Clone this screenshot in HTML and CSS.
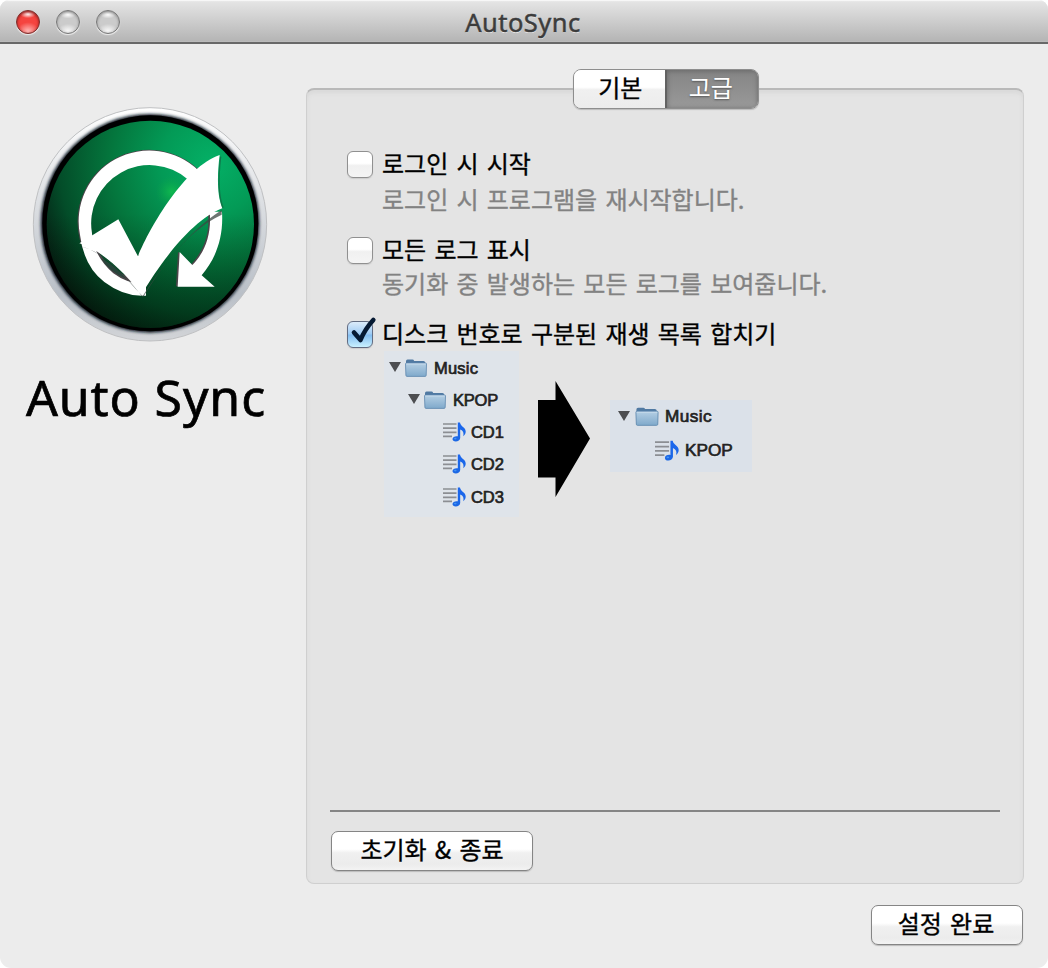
FILE: index.html
```html
<!DOCTYPE html>
<html lang="ko">
<head>
<meta charset="utf-8">
<title>AutoSync</title>
<link rel="stylesheet" href="styles.css">
</head>
<body>
<svg class="defs" width="0" height="0" aria-hidden="true">
  <defs>
    <linearGradient id="folderFill" x1="0" y1="0" x2="0" y2="1">
      <stop offset="0" stop-color="#b5cfe4"/><stop offset="1" stop-color="#7fa9cb"/>
    </linearGradient>
    <linearGradient id="noteFill" x1="0" y1="0" x2="0" y2="1">
      <stop offset="0" stop-color="#1a66ee"/><stop offset="1" stop-color="#1c68e4"/>
    </linearGradient>
    <symbol id="folder" viewBox="0 0 22 18">
      <path d="M1 6V2.2Q1 .6 2.5 .6H7.5Q8.6 .6 9.2 2H18.5Q20 2 20.3 3.8V6Z" fill="#5079a2"/>
      <path d="M.5 5Q.5 4 1.5 4H20.5Q21.5 4 21.5 5L21.2 16.3Q21.2 17.4 20 17.4H2Q.9 17.4.9 16.3Z" fill="url(#folderFill)" stroke="#5d87ad" stroke-width=".8"/>
      <path d="M1.3 5H20.7" stroke="#cbdeed" stroke-width=".8"/>
    </symbol>
    <symbol id="playlist" viewBox="0 0 23 20">
      <path d="M0 2H13.5M0 6.2H13.5M0 10.3H13.5M0 14.4H9" stroke="#8c8e93" stroke-width="1.7"/>
      <path d="M14.8 .6H17C17.4 4.600 22.700 5.300 22.700 9.600C22.700 11.600 21.700 13.400 20.200 14.200C21.100 11 20.200 8.800 17.200 7.600V16C17.100 18.200 15 19.600 12.800 19.600C10.800 19.600 9.500 18.600 9.500 17.100C9.500 15 12.200 13.800 14.800 14.300Z" fill="url(#noteFill)"/>
      <ellipse cx="12.300" cy="16.600" rx="1.300" ry=".8" fill="#4ea0f8" opacity=".8"/>
    </symbol>
  </defs>
</svg>
<div class="window">
  <header class="titlebar">
    <div class="lights"><i class="light close"></i><i class="light"></i><i class="light"></i></div>
    <h1 class="title">AutoSync</h1>
  </header>
  <div class="content">
    <aside class="sidebar">
      <svg class="logo" viewBox="0 0 750 750">
        <defs>
          <linearGradient id="rim" x1="0" y1="0" x2="0" y2="1">
            <stop offset="0" stop-color="#fff"/><stop offset=".45" stop-color="#d9dce0"/><stop offset=".8" stop-color="#b9bfc7"/><stop offset="1" stop-color="#d3d5d8"/>
          </linearGradient>
          <radialGradient id="ball" gradientUnits="userSpaceOnUse" cx="560" cy="190" r="610">
            <stop offset="0" stop-color="#04b066"/><stop offset=".25" stop-color="#039a56"/><stop offset=".5" stop-color="#04763d"/><stop offset=".75" stop-color="#034d29"/><stop offset="1" stop-color="#060708"/>
          </radialGradient>
          <linearGradient id="shade" x1="0" y1="0" x2="0" y2="1">
            <stop offset=".45" stop-color="#001b08" stop-opacity="0"/><stop offset="1" stop-color="#001b08" stop-opacity=".45"/>
          </linearGradient>
          <radialGradient id="glow"><stop offset="0" stop-color="#13c04d" stop-opacity=".8"/><stop offset="1" stop-color="#0aa547" stop-opacity="0"/></radialGradient>
          <filter id="soft"><feGaussianBlur stdDeviation="4"/></filter>
          <filter id="softer"><feGaussianBlur stdDeviation="2"/></filter>
        </defs>
        <circle cx="375" cy="373" r="350" fill="url(#rim)" stroke="#bfc0c2" stroke-width="3"/>
        <circle cx="375" cy="370" r="328" fill="#111923" filter="url(#soft)"/>
        <circle cx="376" cy="370" r="324" fill="#000"/>
        <circle cx="376" cy="373" r="311" fill="url(#ball)"/>
        <circle cx="376" cy="373" r="311" fill="url(#shade)"/>
        <circle cx="440" cy="275" r="48" fill="url(#glow)"/>
        <g filter="url(#softer)">
          <path d="M510 224A196 196 0 1 0 352 562" fill="none" stroke="#4b4448" stroke-width="38" transform="translate(-4 -3)"/>
          <path d="M554 345H588C594 413 573 475 530 526L569 560H458L464 456L502 495C542 454 560 400 554 345Z" fill="#4b4448" transform="translate(-5 -1)"/>
        </g>
        <path d="M521 212A212 212 0 0 0 165 405Q177 500 238 546T363 587V552Q310 554 265 520Q205 467 201 400A175 175 0 0 1 488 238Z" fill="#fff"/>
        <path d="M554 335H591C596 413 573 475 530 526L569 560H458L464 456L502 495C542 454 560 400 554 335Z" fill="#fff"/>
        <path d="M228 474Q263 492 304 536Q250 514 228 474Z" fill="#28443a"/>
        <path d="M165 438C220 454 270 486 352 590C390 530 480 400 590 330V344C490 390 410 500 355 590Q335 572 306 537Q230 454 165 438Z" fill="#3d4743" opacity=".75" filter="url(#softer)"/>
        <path d="M163 430L280 358L339 469C375 380 480 200 584 165C577 220 575 285 592 325C500 360 405 490 350 583C310 530 230 448 163 430Z" fill="#fff"/>
        <path d="M587 170C581 220 579 285 594 323" stroke="#18583c" stroke-width="4" fill="none" opacity=".6"/>
      </svg>
      <p class="appname">Auto Sync</p>
    </aside>
    <main class="main">
      <nav class="tabs"><span class="tab first">기본</span><span class="tab selected">고급</span></nav>
      <section class="panel">
        <div class="options">
          <div class="option"><i class="box"></i><span>로그인 시 시작</span></div>
          <p class="hint">로그인 시 프로그램을 재시작합니다.</p>
          <div class="option second"><i class="box"></i><span>모든 로그 표시</span></div>
          <p class="hint tight">동기화 중 발생하는 모든 로그를 보여줍니다.</p>
          <div class="option third"><i class="box checked"><svg class="check" viewBox="0 0 30 34"><path d="M7 17.500L13.500 25Q18 14 26.300 5" fill="none" stroke="#061a33" stroke-width="4.600" stroke-linecap="round" stroke-linejoin="round"/></svg></i><span>디스크 번호로 구분된 재생 목록 합치기</span></div>
          <div class="example">
            <div class="tree before">
              <div class="node"><i class="disclosure"></i><svg class="folder"><use href="#folder"/></svg><span>Music</span></div>
              <div class="node level2"><i class="disclosure"></i><svg class="folder"><use href="#folder"/></svg><span>KPOP</span></div>
              <div class="node leaf"><svg class="playlist"><use href="#playlist"/></svg><span>CD1</span></div>
              <div class="node leaf"><svg class="playlist"><use href="#playlist"/></svg><span>CD2</span></div>
              <div class="node leaf"><svg class="playlist"><use href="#playlist"/></svg><span>CD3</span></div>
            </div>
            <svg class="arrow" viewBox="0 0 52 116"><path d="M0 19H17.500V0L52 57.500L17.500 116V96.500H0Z"/></svg>
            <div class="tree after">
              <div class="node"><i class="disclosure"></i><svg class="folder"><use href="#folder"/></svg><span>Music</span></div>
              <div class="node leaf"><svg class="playlist"><use href="#playlist"/></svg><span>KPOP</span></div>
            </div>
          </div>
        </div>
        <footer class="actions"><button class="button reset">초기화 &amp; 종료</button></footer>
      </section>
      <button class="button done">설정 완료</button>
    </main>
  </div>
</div>
</body>
</html>
```

FILE: styles.css
```css
* { box-sizing: border-box; }
body { margin: 0; background: #fff; font-family: "Noto Sans", "Noto Sans CJK KR", sans-serif; color: #000; }
p, h1 { margin: 0; font-weight: 400; }
.defs { position: absolute; }
.window { width: 1048px; height: 968px; border-radius: 9px 9px 11px 11px; background: #ececec; overflow: hidden; }
.titlebar { height: 44px; border-bottom: 2px solid #686868; background: linear-gradient(#f2f2f2 0, #e4e4e4 2px, #b5b5b5 41px, #c0c0c0 42px); display: grid; grid-template-columns: 1fr auto 1fr; align-items: center; box-shadow: inset 0 1px #f7f7f7; }
.lights { display: flex; gap: 16px; padding: 1px 0 0 16px; }
.light { width: 24px; height: 24px; border-radius: 50%; border: 1px solid #777; background: radial-gradient(ellipse 8px 4px at 50% 16%, #fff, transparent), radial-gradient(ellipse 10px 7px at 50% 90%, #f8f8f8, transparent), #cbcbcb; box-shadow: inset 0 1px 3px #888, 0 1px 1px #eee; }
.close { border-color: #78302e; background: radial-gradient(ellipse 8px 4px at 50% 14%, #fff, transparent), radial-gradient(ellipse 11px 9px at 50% 92%, #ffbab8, transparent), #f5443f; box-shadow: inset 0 1px 3px #851715, 0 1px 1px #eee; }
.title { font-size: 25.500px; line-height: 40px; color: #3c3c3c; text-shadow: 0 1px #eee; -webkit-text-stroke: .5px #3c3c3c; transform: translate(-1px, 1px); letter-spacing: .5px; }
.content { display: flex; height: 924px; }
.sidebar { width: 306px; padding: 56px 0 0 25px; }
.logo { display: block; width: 250px; height: 250px; }
.appname { width: 242px; font-size: 50px; line-height: 60px; margin-top: 17px; text-align: center; white-space: nowrap; letter-spacing: .9px; -webkit-text-stroke: .7px #000; }
.main { width: 718px; display: flex; flex-direction: column; padding-top: 25px; }
.tabs { align-self: center; width: 186px; height: 40px; display: flex; margin: 0 0 -21px 2px; border: 1.500px solid #8e8e8e; border-radius: 8px; overflow: hidden; z-index: 1; box-shadow: 0 1px 1px #bbb; font: 24px/34px "Noto Sans CJK KR", sans-serif; text-align: center; -webkit-text-stroke: .35px; }
.tab { flex: 1; background: linear-gradient(#fff 45%, #f0f0f0 52%, #ececec); }
.first { padding-left: 2px; }
.selected { color: #fff; background: linear-gradient(#858585, #999); border-left: 2px solid #626262; box-shadow: inset 0 1px 5px #666; text-shadow: 0 1px 2px #555; padding-right: 3px; -webkit-text-stroke: 0; }
.panel { height: 796px; background: #e4e4e4; border: 1.500px solid #cfcfcf; border-top: 2px solid #b9b9b9; border-radius: 8px; box-shadow: inset 0 3px 4px #d9d9d9; display: flex; flex-direction: column; padding: 55px 23px 12px; }
.options { flex: 1; padding-left: 17px; font: 24px/36px "Noto Sans CJK KR", sans-serif; word-spacing: 1.500px; -webkit-text-stroke: .35px; }
.option { display: flex; align-items: center; gap: 9px; height: 36px; }
.second { margin-top: 14px; }
.third { margin-top: 16px; }
.box { position: relative; width: 26px; height: 27px; margin-top: 3px; border: 1.500px solid #909090; border-radius: 6px; background: linear-gradient(#fff 45%, #f0f0f0 55%, #f5f5f5); box-shadow: 0 1px 1px #ccc; }
.checked { border-color: #626c82; background: linear-gradient(#dcecfb, #9ecbf4 48%, #83bdf0 52%, #c9f1ff); }
.check { position: absolute; width: 30px; height: 34px; left: -1px; top: -7px; }
.hint { height: 36px; padding-left: 35px; color: #828282; white-space: nowrap; }
.tight { height: 32px; line-height: 32px; }
.example { display: flex; align-items: flex-start; padding-left: 37px; font: 16.500px/32px "Liberation Sans", sans-serif; word-spacing: 0; }
.tree { background: #dfe4ea; color: #222; -webkit-text-stroke: .7px #222; text-shadow: 0 1px #f2f4f7; }
.before { width: 135px; height: 166px; }
.node { display: flex; align-items: center; height: 32.250px; padding-left: 5px; }
.node span { padding-top: 1px; letter-spacing: .2px; }
.disclosure { border: 6px solid transparent; border-top: 10px solid #4d4e51; border-bottom: 0; }
.folder { width: 22px; height: 18px; margin: 1px 7px 0 4px; }
.level2 { padding-left: 24px; }
.level2 span { letter-spacing: -.2px; }
.leaf { padding-left: 59px; }
.playlist { width: 23px; height: 20px; margin: 1px 5px 0 0; }
.leaf span { letter-spacing: -.1px; }
.arrow { width: 52px; height: 116px; margin: 30px 20px 0 19px; }
.after { width: 142px; height: 72px; margin-top: 49px; background: #dbe1e9; font-size: 17.200px; }
.after .node { height: 32px; padding-left: 8px; }
.after .node span { padding: 0; letter-spacing: .4px; }
.after .folder { width: 24px; height: 19px; margin: 0 6px 0 5px; }
.after .leaf { padding-left: 45px; height: 35px; }
.after .leaf span { letter-spacing: 0; }
.after .playlist { width: 24px; height: 21px; margin-right: 6px; }
.actions { border-top: 2px solid #858585; padding-top: 19px; }
.button { height: 40px; padding: 0 0 4px; border: 1.500px solid #858585; border-radius: 7px; color: #000; background: linear-gradient(#fff 45%, #f0f0f0 55%, #ececec 85%, #f3f3f3); box-shadow: 0 1px 1px #bbb; font: 24px/34px "Noto Sans CJK KR", sans-serif; word-spacing: 1.500px; -webkit-text-stroke: .35px; }
.reset { display: block; width: 202px; margin-left: 1px; }
.done { align-self: flex-end; width: 152px; margin: 21px 1px 0 0; padding-right: 2px; }
```
